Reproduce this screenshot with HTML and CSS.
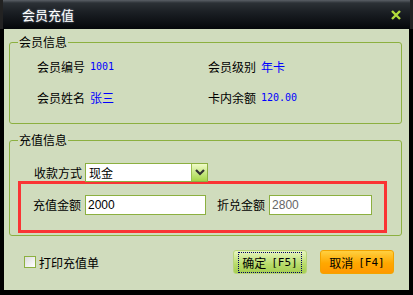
FILE: index.html
```html
<!DOCTYPE html>
<html>

<head>
    <meta charset="utf-8" />
    <title>会员充值</title>
    <link rel="stylesheet" href="styles.css">
</head>

<body>
    <div class="dialog">
        <div class="titlebar">
            <span class="title">会员充值</span>
            <svg class="close" width="10" height="10" viewBox="0 0 10 10">
                <path d="M1 1 L9 9 M9 1 L1 9" stroke="#b4dc3c" stroke-width="2.4" />
            </svg>
        </div>
        <div class="content">
            <fieldset class="group info">
                <legend>会员信息</legend>
                <div class="info-grid">
                    <div class="field"><span class="label">会员编号</span><span class="value num">1001</span></div>
                    <div class="field"><span class="label">会员级别</span><span class="value">年卡</span></div>
                    <div class="field"><span class="label">会员姓名</span><span class="value">张三</span></div>
                    <div class="field"><span class="label">卡内余额</span><span class="value num">120.00</span></div>
                </div>
            </fieldset>
            <fieldset class="group charge">
                <legend>充值信息</legend>
                <div class="charge-body">
                    <div class="pay-row">
                        <span class="label">收款方式</span>
                        <div class="select">
                            <span class="select-text">现金</span>
                            <span class="select-btn">
                                <svg width="10" height="7" viewBox="0 0 10 7">
                                    <path d="M1 1 L5 5 L9 1" fill="none" stroke="#333" stroke-width="2.2" />
                                </svg>
                            </span>
                        </div>
                    </div>
                    <div class="highlight">
                        <span class="label">充值金额</span>
                        <div class="input amount">2000</div>
                        <span class="label label-gap">折兑金额</span>
                        <div class="input converted">2800</div>
                    </div>
                </div>
            </fieldset>
            <div class="footer">
                <label class="check"><span class="box"></span>打印充值单</label>
                <div class="buttons">
                    <button class="btn ok"><span class="focus"><span>确定</span><span class="key">[F5]</span></span></button>
                    <button class="btn cancel"><span>取消</span><span class="key">[F4]</span></button>
                </div>
            </div>
        </div>
    </div>
</body>

</html>
```

FILE: styles.css
```css
body {
    margin: 0;
    background: #000;
    font-family: "Noto Sans CJK SC", "Liberation Sans", sans-serif;
    font-size: 12px;
    color: #000;
}

.dialog {
    width: 413px;
    height: 295px;
    background: #000;
    display: flex;
    flex-direction: column;
}

/* Title bar */
.titlebar {
    height: 29px;
    flex: none;
    display: flex;
    align-items: center;
    justify-content: space-between;
    padding: 0 9px 0 22px;
    box-sizing: border-box;
    background: linear-gradient(to bottom, #5a5f66 0, #2c3136 3px, #1b1f24 12px, #04070a 100%);
    border-left: 3px solid #222;
    border-right: 3px solid #222;
}

.title {
    color: #fff;
    font-size: 13px;
    line-height: 14px;
    margin-left: -3px;
    text-shadow: 0 0 2px #9ab;
}

.close {
    display: block;
}

.content {
    height: 261px;
    margin: 0 4px 0 4px;
    background: #d0dcbd;
    display: flex;
    flex-direction: column;
}

/* Group boxes */
.group {
    margin: 0 7px 0 5px;
    padding: 0;
    border: 1px solid #8cb040;
    border-radius: 3px;
}

.group legend {
    margin-left: 8px;
    padding: 0 1px;
    line-height: 14px;
    height: 14px;
}

.info {
    margin-top: 6px;
}

.info-grid {
    display: grid;
    grid-template-columns: 171px 1fr;
    row-gap: 11px;
    padding: 7px 0 16px 27px;
}

.field {
    height: 20px;
    display: flex;
    align-items: center;
    gap: 5px;
}

.value {
    color: #0000ff;
}

.num {
    font-family: "DejaVu Sans Mono", monospace;
    font-size: 10px;
}

.charge {
    margin-top: 9px;
}

.charge-body {
    padding: 16px 14px 2px 8px;
}

.pay-row {
    height: 19px;
    display: flex;
    align-items: center;
    gap: 3px;
    padding-left: 16px;
}

.select {
    width: 123px;
    height: 19px;
    box-sizing: border-box;
    border: 1px solid #8cb040;
    background: #fff;
    display: flex;
    align-items: center;
    justify-content: space-between;
}

.select-text {
    padding-left: 3px;
}

.select-btn {
    width: 15px;
    height: 17px;
    background: linear-gradient(to bottom, #f0fbc8, #a4d646);
    border-left: 1px solid #9cc050;
    display: flex;
    align-items: center;
    justify-content: center;
}

.highlight {
    margin-top: -1px;
    height: 52px;
    box-sizing: border-box;
    border: 3px solid #fa3434;
    display: flex;
    align-items: flex-start;
    padding: 11px 0 0 12px;
}

.highlight .label {
    line-height: 20px;
}

.input {
    height: 20px;
    box-sizing: border-box;
    border: 1px solid #8cb040;
    background: #fff;
    font-family: "Liberation Sans", sans-serif;
    font-size: 12px;
    line-height: 18px;
    padding-left: 2px;
    margin-left: 4px;
}

.amount {
    width: 121px;
}

.converted {
    width: 103px;
    color: #666;
}

.label-gap {
    margin-left: 11px;
}

/* Footer */
.footer {
    display: flex;
    align-items: center;
    justify-content: space-between;
    margin-top: 14px;
    padding: 0 15px 0 20px;
    height: 24px;
}

.check {
    display: flex;
    align-items: center;
    gap: 3px;
}

.box {
    width: 12px;
    height: 12px;
    box-sizing: border-box;
    border: 1px solid #8cb040;
    background: linear-gradient(135deg, #dcdcdc, #fff);
}

.buttons {
    display: flex;
    gap: 13px;
}

.btn {
    width: 74px;
    height: 24px;
    border-radius: 3px;
    font-family: "Noto Sans CJK SC", sans-serif;
    font-size: 12px;
    color: #000;
    padding: 0;
    display: flex;
    align-items: center;
    justify-content: center;
    gap: 5px;
}

.key {
    font-family: "DejaVu Sans Mono", monospace;
    font-size: 11px;
}

.ok {
    border: 1px solid #b8d47a;
    background: linear-gradient(to bottom, #e8f6c0, #b8dc6a 60%, #a6cf52);
}

.focus {
    display: flex;
    align-items: center;
    gap: 5px;
    border: 1px dotted #000066;
    padding: 1px 3px;
}

.cancel {
    border: 1px solid #f2a400;
    background: linear-gradient(to bottom, #ffd040, #ffa800 55%, #ff9800);
}
```
